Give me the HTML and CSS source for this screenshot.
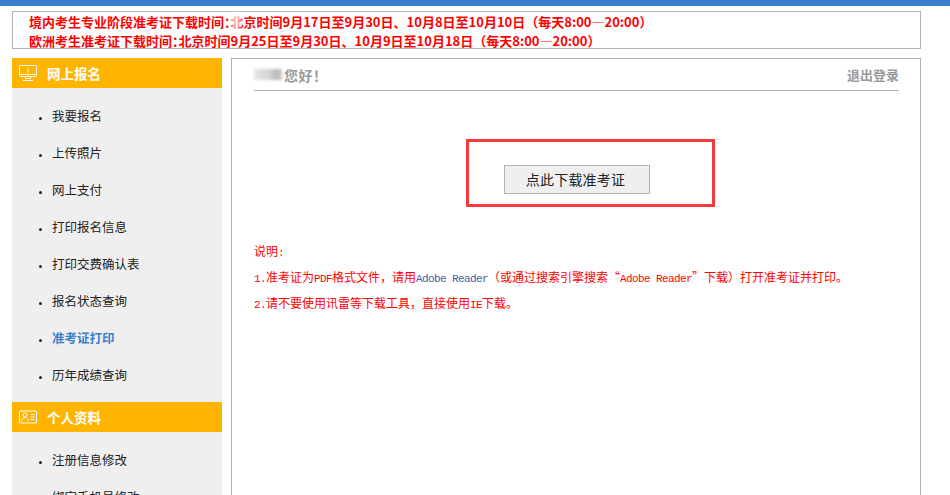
FILE: index.html
```html
<!DOCTYPE html>
<html lang="zh-CN">
<head>
    <meta charset="UTF-8">
    <meta name="viewport" content="width=device-width, initial-scale=1.0">
    <title>准考证打印</title>
    <link rel="stylesheet" href="styles.css">
</head>
<body>
    <div class="top-bar"></div>
    <div class="wrapper">
        <div class="notice">
            <p>境内考生专业阶段准考证下载时间：北京时间9月17日至9月30日<span class="full">、</span>10月8日至10月10日<span class="full">（每天8:00—20:00）</span></p>
            <p>欧洲考生准考证下载时间：北京时间9月25日至9月30日<span class="full">、</span>10月9日至10月18日<span class="full">（每天8:00—20:00）</span></p>
            <span class="notice-blur"></span>
        </div>

        <div class="content">
            <div class="sidebar">
                <div class="side-title">
                    <svg class="side-icon" viewBox="0 0 18 16" fill="none" stroke="#fff" stroke-width="1">
                        <rect x="0.5" y="0.5" width="17" height="11" rx="1"/>
                        <path d="M0.5 9.5h17M9 3.5v4M6.5 12v1.5h5V12M4 15.5h10"/>
                    </svg>
                    <span>网上报名</span>
                </div>
                <ul class="side-menu">
                    <li><a href="#">我要报名</a></li>
                    <li><a href="#">上传照片</a></li>
                    <li><a href="#">网上支付</a></li>
                    <li><a href="#">打印报名信息</a></li>
                    <li><a href="#">打印交费确认表</a></li>
                    <li><a href="#">报名状态查询</a></li>
                    <li><a href="#" class="active">准考证打印</a></li>
                    <li><a href="#">历年成绩查询</a></li>
                </ul>
                <div class="side-title">
                    <svg class="side-icon" viewBox="0 0 18 13" fill="none" stroke="#fff" stroke-width="1">
                        <rect x="0.5" y="0.5" width="17" height="12" rx="1"/>
                        <circle cx="6" cy="4.5" r="2"/>
                        <path d="M2.5 10.5c0.5-2.5 2-3.5 3.5-3.5s3 1 3.5 3.5M11.5 4h4M11.5 6.5h4M11.5 9h4"/>
                    </svg>
                    <span>个人资料</span>
                </div>
                <ul class="side-menu">
                    <li><a href="#">注册信息修改</a></li>
                    <li><a href="#">绑定手机号修改</a></li>
                </ul>
            </div>

            <div class="main">
                <div class="main-head">
                    <div class="hello"><span class="name-blur"></span>您好！</div>
                    <a href="#" class="logout">退出登录</a>
                </div>

                <div class="download">
                    <button type="button" class="download-button">点此下载准考证</button>
                    <span class="mark-box"></span>
                </div>

                <div class="tips">
                    <p>说明<span class="mono">:</span></p>
                    <p><span class="mono">1.</span>准考证为<span class="mono">PDF</span>格式文件，请用<a href="#" class="mono link">Adobe Reader</a>（或通过搜索引擎搜索“<span class="mono">Adobe Reader</span>”下载）打开准考证并打印。</p>
                    <p><span class="mono">2.</span>请不要使用讯雷等下载工具，直接使用<span class="mono">IE</span>下载。</p>
                </div>
            </div>
        </div>
    </div>
</body>
</html>
```

FILE: styles.css
```css
* {
    margin: 0;
    padding: 0;
    box-sizing: border-box;
}

html, body {
    height: 495px;
    overflow: hidden;
}

body {
    font-family: "Noto Sans CJK SC", sans-serif;
    background: #fff;
}

a {
    text-decoration: none;
}

.top-bar {
    height: 6px;
    background: #3a7fcd;
}

.wrapper {
    width: 909px;
    margin: 5px 0 0 12px;
}

.notice {
    position: relative;
    height: 38px;
    padding-left: 16px;
    border: 1px solid #b4b4b4;
    color: #f00;
    font-size: 13px;
    font-weight: 700;
    line-height: 19px;
    white-space: nowrap;
    font-feature-settings: "palt";
}

.notice .full {
    font-feature-settings: normal;
}

.notice-blur {
    position: absolute;
    left: 218px;
    top: 1px;
    width: 10px;
    height: 16px;
    background: rgba(255, 255, 255, 0.7);
    filter: blur(2px);
}

.content {
    display: flex;
    gap: 9px;
    margin-top: 9px;
}

.sidebar {
    flex: none;
    width: 210px;
    height: 460px;
    background: #efefef;
}

.side-title {
    display: flex;
    align-items: center;
    gap: 10px;
    height: 30px;
    padding-left: 7px;
    background: #ffb400;
    color: #fff;
    font-size: 13.5px;
    font-weight: 700;
}

.side-icon {
    width: 18px;
    height: 16px;
}

.side-menu {
    padding: 10px 0 8px 40px;
    list-style: none;
}

.side-menu li {
    position: relative;
    height: 37px;
    font-size: 12.5px;
    line-height: 35px;
}

.side-menu li::before {
    content: "";
    position: absolute;
    left: -13px;
    top: 19px;
    width: 3px;
    height: 3px;
    border-radius: 50%;
    background: #222;
}

.side-menu a {
    color: #222;
}

.side-menu a.active {
    color: #3a7fcd;
    font-weight: 700;
}

.main {
    flex: none;
    width: 690px;
    height: 460px;
    padding: 0 21px 0 22px;
    border: 1px solid #b4b4b4;
}

.main-head {
    display: flex;
    justify-content: space-between;
    align-items: center;
    height: 32px;
    border-bottom: 1px solid #b4b4b4;
    color: #999;
    font-size: 13px;
    font-weight: 700;
}

.hello {
    display: flex;
    align-items: center;
    gap: 2px;
    font-size: 14px;
    letter-spacing: 0.5px;
}

.name-blur {
    width: 28px;
    height: 11px;
    background: linear-gradient(90deg, #e6e6e6 0%, #d4d4d4 55%, #b8b8b8 80%, #c8c8c8 100%);
    filter: blur(1.5px);
}

.logout {
    color: #999;
}

.download {
    position: relative;
    display: flex;
    justify-content: center;
    margin-top: 74px;
}

.download-button {
    width: 146px;
    height: 29px;
    padding: 0 2px 2px 0;
    border: 1px solid #b4b4b4;
    background: #efefef;
    color: #222;
    font-family: inherit;
    font-size: 14px;
    letter-spacing: 0.2px;
}

.mark-box {
    position: absolute;
    left: 212px;
    top: -26px;
    width: 249px;
    height: 68px;
    border: 3px solid #f63b3b;
}

.tips {
    margin-top: 44px;
    color: #f00;
    font-size: 12px;
    line-height: 26px;
}

.tips p {
    height: 26px;
}

.mono {
    font-family: "Liberation Mono", monospace;
    font-size: 11px;
    letter-spacing: -0.6px;
}

.link {
    color: #3a62a8;
}
```
